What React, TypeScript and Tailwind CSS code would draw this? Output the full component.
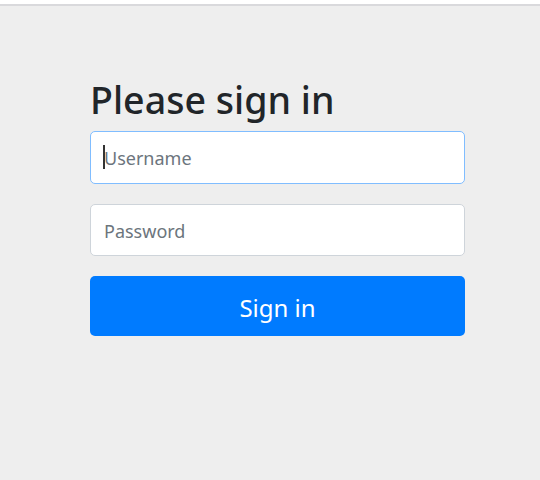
import React from "react";

export default function App() {
  return (
    <div
      className="min-h-screen w-full bg-[#eeeeee] flex flex-col"
      style={{ fontFamily: '"Noto Sans", "Open Sans", sans-serif' }}
    >
      <div className="h-[4px] bg-white" />
      <div className="h-[2px] bg-[#d9d9dc]" />
      <div className="flex justify-start pl-[90px] pt-[72px]">
        <form className="w-[375px] flex flex-col" onSubmit={(e) => e.preventDefault()}>
          <h2 className="text-[37.6px] leading-[44px] font-medium text-[#212529] mb-[9px]">
            Please sign in
          </h2>
          <div className="relative">
            <input
              type="text"
              placeholder="Username"
              className="w-full h-[53px] bg-white border border-[#80bdff] rounded-[5px] pl-[13px] pr-[12px] pt-[1px] text-[18px] text-[#495057] placeholder:text-[#6c757d] outline-none"
            />
            <span className="absolute left-[13px] top-[14px] w-[2px] h-[24px] bg-[#333333]" />
          </div>
          <input
            type="password"
            placeholder="Password"
            className="mt-[20px] w-full h-[52px] bg-white border border-[#ced4da] rounded-[5px] pl-[13px] pr-[12px] pt-[1px] text-[18px] text-[#495057] placeholder:text-[#6c757d] outline-none"
          />
          <button
            type="submit"
            className="mt-[20px] w-full h-[60px] bg-[#007bff] text-white rounded-[5px] text-[24px] leading-none pt-[3px]"
          >
            Sign in
          </button>
        </form>
      </div>
    </div>
  );
}
